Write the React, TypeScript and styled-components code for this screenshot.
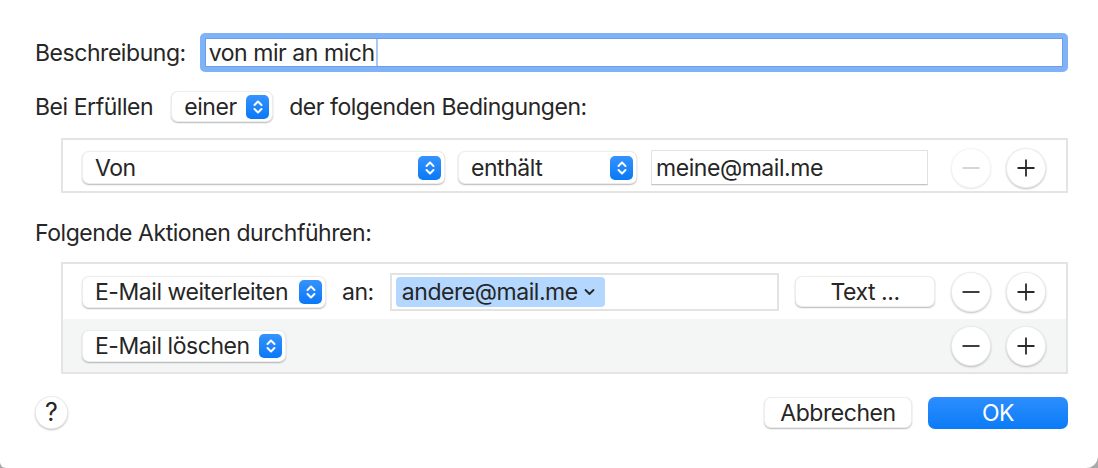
import React from "react";
import styled, { createGlobalStyle, css } from "styled-components";

const GlobalStyle = createGlobalStyle`
  *, *::before, *::after { box-sizing: border-box; }
  html, body { margin: 0; padding: 0; background: #a9a9a9; }
  body { font-family: Inter, "Liberation Sans", "Noto Sans", sans-serif; }
  #root { width: 1098px; height: 468px; }
`;

const Dialog = styled.div`
  width: 1098px;
  height: 468px;
  background: #fff;
  border-radius: 0 0 12px 6px;
  padding: 33px 30px 0 35px;
  display: flex;
  flex-direction: column;
  color: #262626;
  font-size: 23px;
  letter-spacing: -0.45px;
`;

const Row = styled.div<{ $mt?: number; $h?: number }>`
  display: flex;
  align-items: center;
  margin-top: ${(p) => p.$mt ?? 0}px;
  height: ${(p) => (p.$h ? `${p.$h}px` : "auto")};
`;

const Label = styled.span<{ $mr?: number; $ml?: number }>`
  margin-right: ${(p) => p.$mr ?? 0}px;
  margin-left: ${(p) => p.$ml ?? 0}px;
  white-space: nowrap;
  line-height: 28px;
`;

const FocusField = styled.div`
  flex: 1;
  height: 39px;
  border: 5px solid #80b2f8;
  border-radius: 5px;
  box-shadow: inset 0 0 0 1px #6c9fe6;
  display: flex;
  align-items: center;
  padding-left: 4px;
  background: #fff;
`;

const Caret = styled.span`
  display: inline-block;
  width: 2px;
  height: 27px;
  background: #a8c9f5;
  margin-left: 1px;
`;

const PopupBox = styled.div<{ $w: number; $h?: number; $ml?: number }>`
  width: ${(p) => p.$w}px;
  height: ${(p) => p.$h ?? 32}px;
  margin-left: ${(p) => p.$ml ?? 0}px;
  background: #fff;
  border-radius: 7px;
  border: 1px solid rgba(0, 0, 0, 0.07);
  box-shadow: 0 1px 1.5px rgba(0, 0, 0, 0.28);
  display: flex;
  align-items: center;
  justify-content: space-between;
  padding: 0 3px 0 12px;
  flex-shrink: 0;
  white-space: nowrap;
`;

const Stepper = styled.span`
  width: 23px;
  height: 24px;
  border-radius: 5px;
  background: linear-gradient(#3593fd, #0a78f6);
  display: flex;
  align-items: center;
  justify-content: center;
`;

const Popup = ({ label, w, h, ml }: { label: string; w: number; h?: number; ml?: number }) => (
  <PopupBox $w={w} $h={h} $ml={ml}>
    <span>{label}</span>
    <Stepper>
      <svg width="12" height="16" viewBox="0 0 12 16" fill="none" stroke="#fff" strokeWidth="2" strokeLinecap="round" strokeLinejoin="round">
        <path d="M2.5 6 L6 2.5 L9.5 6" />
        <path d="M2.5 10 L6 13.5 L9.5 10" />
      </svg>
    </Stepper>
  </PopupBox>
);

const Group = styled.div<{ $mt: number }>`
  margin: ${(p) => p.$mt}px 0 0 26px;
  border: 2px solid #e4e4e4;
  display: flex;
  flex-direction: column;
`;

const GroupRow = styled.div<{ $h: number; $shade?: boolean; $pt?: number }>`
  height: ${(p) => p.$h}px;
  display: flex;
  align-items: center;
  padding: ${(p) => p.$pt ?? 0}px 20px 0 19px;
  background: ${(p) => (p.$shade ? "#f4f5f5" : "#fff")};
`;

const TextField = styled.div<{ $w: number }>`
  width: ${(p) => p.$w}px;
  height: 35px;
  border: 1px solid #e2e2e2;
  border-bottom-color: #c4c4c4;
  box-shadow: 0 1px 0 rgba(0, 0, 0, 0.06);
  display: flex;
  align-items: center;
  padding-left: 4px;
  margin-left: 14px;
  flex-shrink: 0;
`;

const TokenField = styled.div`
  width: 389px;
  height: 38px;
  border: 2px solid #e3e3e3;
  display: flex;
  align-items: center;
  padding-left: 4px;
  margin-left: 16px;
  flex-shrink: 0;
`;

const Token = styled.span`
  height: 30px;
  background: #b3d7ff;
  border-radius: 4px;
  display: flex;
  align-items: center;
  gap: 6px;
  padding: 0 10px 0 6px;
  white-space: nowrap;
`;

const Spacer = styled.div`
  flex: 1;
`;

const PushButton = styled.button<{ $w: number; $primary?: boolean; $ml?: number }>`
  width: ${(p) => p.$w}px;
  height: 31px;
  margin-left: ${(p) => p.$ml ?? 0}px;
  font: inherit;
  letter-spacing: inherit;
  border-radius: 7px;
  display: flex;
  align-items: center;
  justify-content: center;
  padding: 0;
  flex-shrink: 0;
  ${(p) =>
    p.$primary
      ? css`
          background: linear-gradient(#2d8efd, #0b7bf8);
          color: #fff;
          border: none;
          height: 32px;
        `
      : css`
          background: #fff;
          color: #262626;
          border: 1px solid rgba(0, 0, 0, 0.07);
          box-shadow: 0 1px 1.5px rgba(0, 0, 0, 0.28);
        `}
`;

const Circle = styled.button<{ $size?: number; $disabled?: boolean; $ml?: number }>`
  width: ${(p) => p.$size ?? 40}px;
  height: ${(p) => p.$size ?? 40}px;
  border-radius: 50%;
  background: #fff;
  border: 1px solid rgba(0, 0, 0, ${(p) => (p.$disabled ? 0.04 : 0.07)});
  box-shadow: 0 1px 2px rgba(0, 0, 0, ${(p) => (p.$disabled ? 0.1 : 0.25)});
  display: flex;
  align-items: center;
  justify-content: center;
  padding: 0;
  margin-left: ${(p) => p.$ml ?? 0}px;
  flex-shrink: 0;
  font: inherit;
  color: #262626;
`;

const Minus = ({ disabled }: { disabled?: boolean }) => (
  <svg width="20" height="20" viewBox="0 0 20 20">
    <path d="M1.5 10 H18.5" stroke={disabled ? "#d2d2d2" : "#2a2a2a"} strokeWidth="1.8" />
  </svg>
);

const Plus = () => (
  <svg width="20" height="20" viewBox="0 0 20 20">
    <path d="M1.5 10 H18.5 M10 1.5 V18.5" stroke="#2a2a2a" strokeWidth="1.8" />
  </svg>
);

const Footer = styled.div`
  margin-top: 22px;
  display: flex;
  align-items: center;
  height: 33px;
`;

const HelpQ = styled.span`
  font-size: 25px;
  font-weight: 400;
  line-height: 1;
`;

export default function App() {
  return (
    <>
      <GlobalStyle />
      <Dialog>
        <Row $h={39}>
          <Label $mr={14}>Beschreibung:</Label>
          <FocusField>
            von mir an mich
            <Caret />
          </FocusField>
        </Row>
        <Row $mt={19} $h={31}>
          <Label $mr={18}>Bei Erfüllen</Label>
          <Popup label="einer" w={102} h={31} />
          <Label $ml={16}>der folgenden Bedingungen:</Label>
        </Row>
        <Group $mt={16}>
          <GroupRow $h={51} $pt={4}>
            <Popup label="Von" w={363} h={33} />
            <Popup label="enthält" w={179} h={33} ml={13} />
            <TextField $w={277}>meine@mail.me</TextField>
            <Spacer />
            <Circle $disabled>
              <Minus disabled />
            </Circle>
            <Circle $ml={15}>
              <Plus />
            </Circle>
          </GroupRow>
        </Group>
        <Row $mt={26}>
          <Label>Folgende Aktionen durchführen:</Label>
        </Row>
        <Group $mt={15}>
          <GroupRow $h={55}>
            <Popup label="E-Mail weiterleiten" w={244} />
            <Label $ml={16}>an:</Label>
            <TokenField>
              <Token>
                andere@mail.me
                <svg width="11" height="8" viewBox="0 0 11 8" fill="none" stroke="#262626" strokeWidth="1.8" strokeLinecap="round" strokeLinejoin="round">
                  <path d="M1.5 2 L5.5 6 L9.5 2" />
                </svg>
              </Token>
            </TokenField>
            <Spacer />
            <PushButton $w={140}>Text ...</PushButton>
            <Circle $ml={16}>
              <Minus />
            </Circle>
            <Circle $ml={15}>
              <Plus />
            </Circle>
          </GroupRow>
          <GroupRow $h={53} $shade>
            <Popup label="E-Mail löschen" w={204} />
            <Spacer />
            <Circle>
              <Minus />
            </Circle>
            <Circle $ml={15}>
              <Plus />
            </Circle>
          </GroupRow>
        </Group>
        <Footer>
          <Circle $size={33}>
            <HelpQ>?</HelpQ>
          </Circle>
          <Spacer />
          <PushButton $w={148}>Abbrechen</PushButton>
          <PushButton $w={140} $primary $ml={16}>
            OK
          </PushButton>
        </Footer>
      </Dialog>
    </>
  );
}
